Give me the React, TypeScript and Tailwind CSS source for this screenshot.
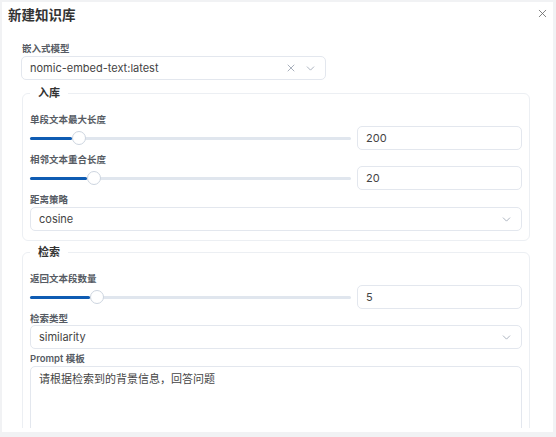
import React from "react";
import { X, ChevronDown } from "lucide-react";

const font = "font-['Inter','Noto_Sans_CJK_SC',sans-serif]";

function Label({ children, className = "" }: { children: React.ReactNode; className?: string }) {
  return (
    <div className={`h-[13px] leading-[13px] text-[9.5px] font-semibold text-[#565b63] ${className}`}>
      {children}
    </div>
  );
}

function SliderRow({ value, thumb }: { value: string; thumb: number }) {
  return (
    <div className="flex items-center h-[24px] gap-[6px]">
      <div className="relative w-[321px] h-[24px] flex items-center">
        <div className="w-full h-[3px] rounded-full bg-[#e0e6ee]" />
        <div
          className="absolute left-0 h-[3px] rounded-full bg-[#0f5cb3]"
          style={{ width: `${thumb - 7}px` }}
        />
        <div
          className="absolute top-[5px] w-[14px] h-[14px] rounded-full bg-white border border-[#cdd5df]"
          style={{ left: `${thumb - 7}px` }}
        />
      </div>
      <div className="flex-1 h-[24px] rounded-[5px] border border-[#e3e7ee] flex items-center pl-[8px] text-[11px] text-[#444]">
        {value}
      </div>
    </div>
  );
}

function Select({ value, clear = false, className = "" }: { value: string; clear?: boolean; className?: string }) {
  return (
    <div
      className={`h-[24px] rounded-[5px] border border-[#e3e7ee] flex items-center pl-[8px] pr-[8px] text-[11px] text-[#444] ${className}`}
    >
      <span className="flex-1">{value}</span>
      {clear && <X size={12} strokeWidth={1.5} className="text-[#8c96a6] mr-[7px]" />}
      <ChevronDown size={13} strokeWidth={1.5} className="text-[#9aa3b1]" />
    </div>
  );
}

function Group({ title, children, className = "" }: { title: string; children: React.ReactNode; className?: string }) {
  return (
    <fieldset className={`w-[508px] ml-[1px] rounded-[6px] border border-[#eceff3] px-[7px] pt-[12px] pb-[9px] ${className}`}>
      <legend className="px-[8px] h-[16px] leading-[16px] text-[11px] font-bold text-[#333]">{title}</legend>
      {children}
    </fieldset>
  );
}

export default function App() {
  return (
    <div className={`w-[556px] h-[437px] bg-[#f1f2f4] pt-[2px] pl-[2px] pr-[3px] pb-[5px] ${font}`}>
      <div className="relative w-full h-full bg-white flex flex-col">
        <div className="h-[38px] shrink-0 pl-[6px] pt-[3px]">
          <div className="h-[20px] leading-[20px] text-[13.5px] font-bold text-[#333]">新建知识库</div>
        </div>
        <X size={13} strokeWidth={1.5} className="absolute right-[4px] top-[5px] text-[#666]" />
        <div className="h-[388px] overflow-hidden pl-[19px]">
          <Label className="pl-[1px] h-[14px] leading-[15px] mt-[1px]">嵌入式模型</Label>
          <Select value="nomic-embed-text:latest" clear className="w-[305px] mt-[1px]" />

          <Group title="入库" className="mt-[5px]">
            <Label>单段文本最大长度</Label>
            <SliderRow value="200" thumb={49} />
            <Label className="mt-[3px]">相邻文本重合长度</Label>
            <SliderRow value="20" thumb={64} />
            <Label className="mt-[3px]">距离策略</Label>
            <Select value="cosine" className="mt-[1px]" />
          </Group>

          <Group title="检索" className="mt-[3px]">
            <Label>返回文本段数量</Label>
            <SliderRow value="5" thumb={67} />
            <Label className="mt-[3px]">检索类型</Label>
            <Select value="similarity" />
            <Label className="mt-[3px]">Prompt 模板</Label>
            <div className="mt-[1px] h-[90px] rounded-[5px] border border-[#e3e7ee] px-[8px] pt-[5px] text-[11px] leading-[15px] text-[#444]">
              请根据检索到的背景信息，回答问题
            </div>
          </Group>
        </div>
      </div>
    </div>
  );
}
